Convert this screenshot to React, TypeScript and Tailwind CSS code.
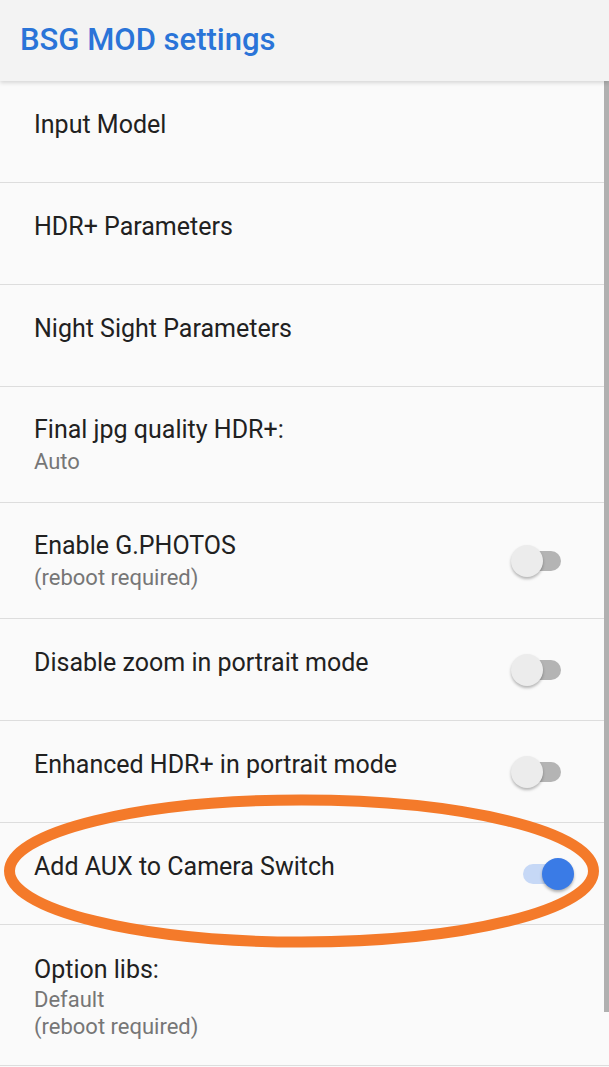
import React from "react";

type Row = {
  title: string;
  subs?: string[];
  toggle?: "on" | "off";
};

const rows: Row[] = [
  { title: "Input Model" },
  { title: "HDR+ Parameters" },
  { title: "Night Sight Parameters" },
  { title: "Final jpg quality HDR+:", subs: ["Auto"] },
  { title: "Enable G.PHOTOS", subs: ["(reboot required)"], toggle: "off" },
  { title: "Disable zoom in portrait mode", toggle: "off" },
  { title: "Enhanced HDR+ in portrait mode", toggle: "off" },
  { title: "Add AUX to Camera Switch", toggle: "on" },
  { title: "Option libs:", subs: ["Default", "(reboot required)"] },
];

const Toggle = ({ on }: { on: boolean }) => (
  <div className="relative w-[63px] h-[32px] shrink-0">
    <div
      className={
        on
          ? "absolute left-[12px] top-[6px] w-[38px] h-[20px] rounded-full bg-[#c6d8f6]"
          : "absolute left-[12px] top-[6px] w-[38px] h-[20px] rounded-full bg-[#b4b4b4]"
      }
    />
    <div
      className={
        on
          ? "absolute left-[31px] top-0 w-[32px] h-[32px] rounded-full bg-[#3a7be6] shadow-[0_2px_3px_rgba(0,0,0,0.3)]"
          : "absolute left-0 top-0 w-[32px] h-[32px] rounded-full bg-[#ececec] shadow-[0_2px_3px_rgba(0,0,0,0.28)]"
      }
    />
  </div>
);

const SettingRow = ({ row }: { row: Row }) => {
  const n = row.subs?.length ?? 0;
  return (
    <div className="flex items-center justify-between border-b border-[#dddddd] pl-[34px] pr-[35px]">
      <div
        className={
          n === 0
            ? "pt-[27px] pb-[41px]"
            : n === 1
            ? "pt-[26px] pb-[24px]"
            : "pt-[28px] pb-[25px]"
        }
      >
        <div className="text-[25px] leading-[33px] text-[#212121]">{row.title}</div>
        {row.subs?.map((s) => (
          <div
            key={s}
            className={
              n === 1
                ? "text-[22px] leading-[32px] text-[#767676]"
                : "text-[22px] leading-[27px] text-[#767676]"
            }
          >
            {s}
          </div>
        ))}
      </div>
      {row.toggle && <Toggle on={row.toggle === "on"} />}
    </div>
  );
};

export default function App() {
  return (
    <div
      className="relative w-[609px] h-[1067px] overflow-hidden bg-[#fafafa]"
      style={{ fontFamily: "Roboto, 'Noto Sans', sans-serif" }}
    >
      {/* App bar */}
      <div className="relative z-10 h-[81px] flex items-center px-[20px] bg-[#f3f3f3] shadow-[0_2px_4px_rgba(0,0,0,0.14)]">
        <h1 className="text-[31px] font-medium text-[#2a74d8]">BSG MOD settings</h1>
      </div>

      {/* List */}
      <div className="flex flex-col">
        {rows.map((r) => (
          <SettingRow key={r.title} row={r} />
        ))}
      </div>

      {/* scrollbar */}
      <div className="absolute right-0 top-[81px] w-[5px] h-[931px] bg-[#b0b0b0]" />

      {/* highlight mark */}
      <svg
        className="absolute left-0 top-0 pointer-events-none"
        width="609"
        height="1067"
        viewBox="0 0 609 1067"
      >
        <ellipse
          cx="301.5"
          cy="871"
          rx="292"
          ry="71"
          fill="none"
          stroke="#f47a2a"
          strokeWidth="11"
        />
      </svg>
    </div>
  );
}
